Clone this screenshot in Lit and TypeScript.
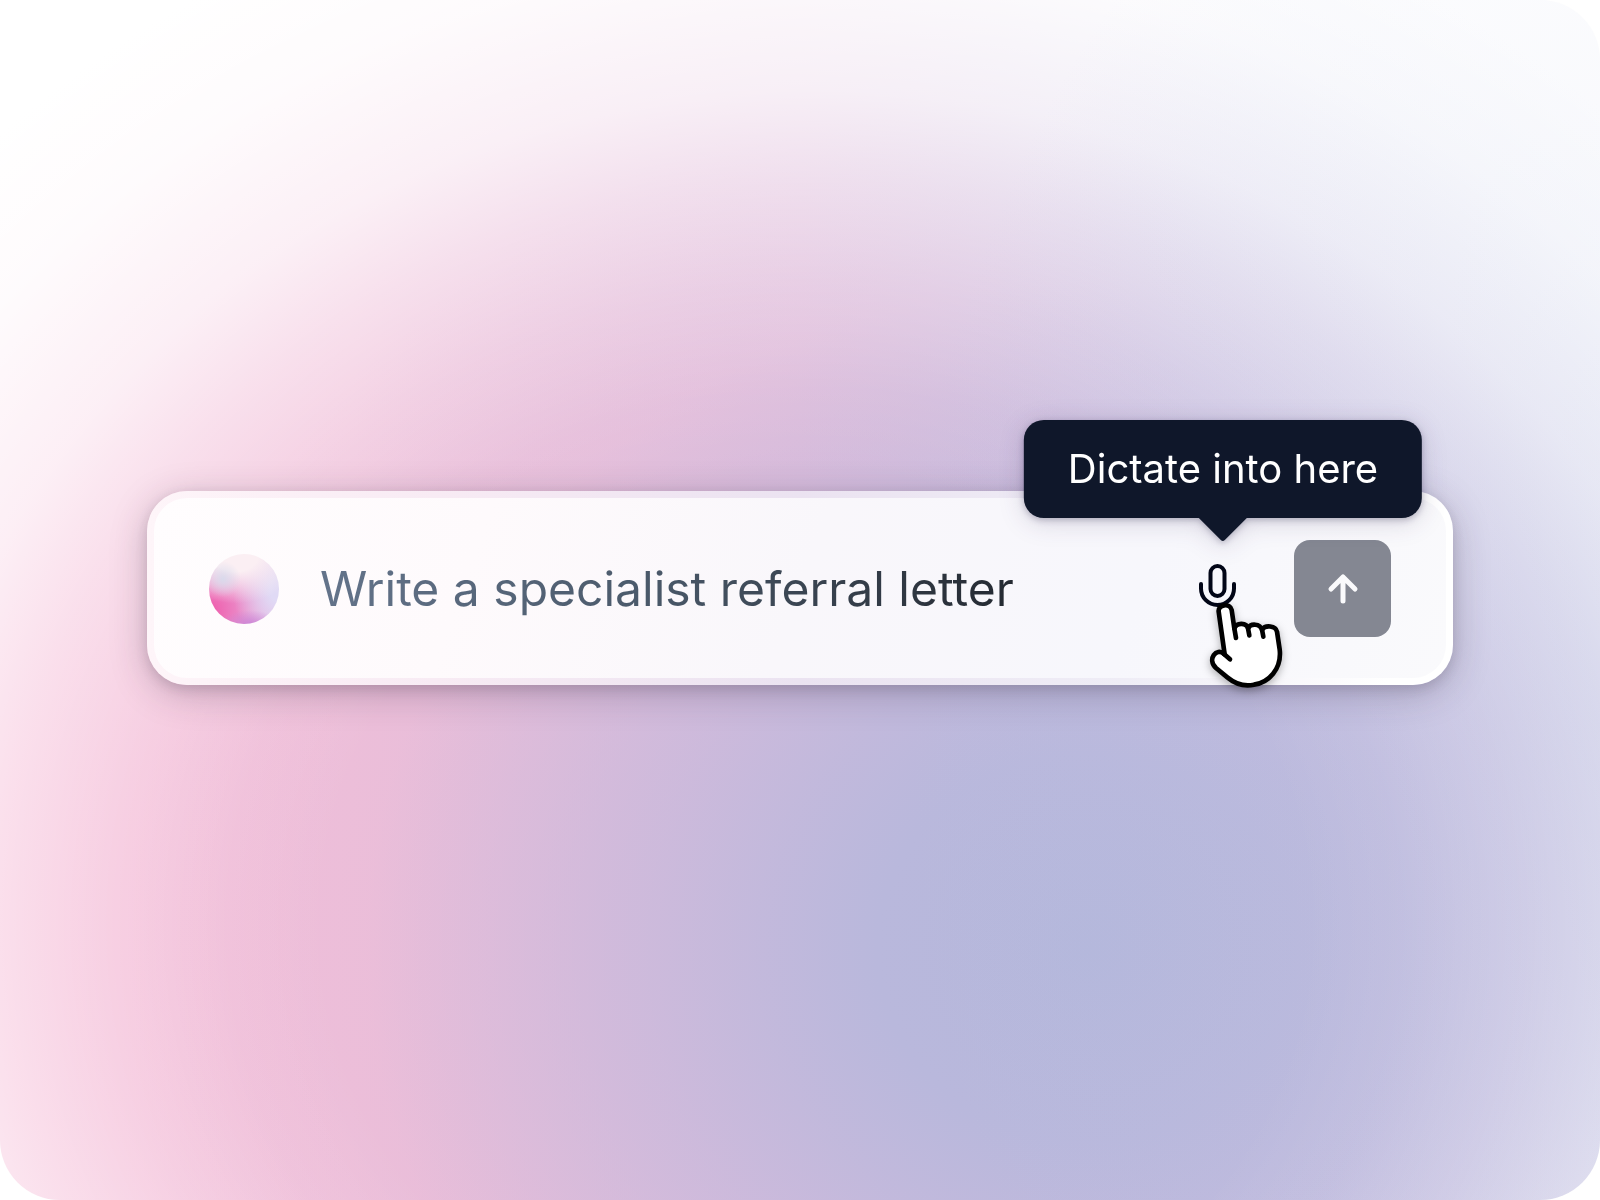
import { LitElement, html, css, svg } from "lit";
import { customElement, property } from "lit/decorators.js";

const micIcon = svg`
  <svg class="icon" viewBox="0 0 56 56" aria-hidden="true">
    <rect x="20.5" y="5" width="14" height="30" rx="7"></rect>
    <path d="M11 23v4.5a16.5 16.5 0 0 0 33 0V23"></path>
  </svg>`;

const arrowIcon = svg`
  <svg class="arrow" viewBox="0 0 40 40" aria-hidden="true">
    <path d="M20 32V8M8 20L20 8L32 20"></path>
  </svg>`;

const handCursor = svg`
  <svg class="cursor" viewBox="84 180 234 282" aria-hidden="true">
    <path class="hand" d="M134 340L116 212C113 190 150 185 155 207L163 262C170 243 200 245 204 262C212 246 240 248 246 266C256 251 287 254 291 272L299 325C306 385 265 425 222 431C190 438 165 428 142 409L108 381C80 355 110 318 132 339Z"></path>
    <path class="crease" d="M163 262L168 291M204 262L208 283M246 266L250 287M132 339L150 355"></path>
  </svg>`;

@customElement("prompt-bar")
export class PromptBar extends LitElement {
  @property() prompt = "";
  @property() hint = "";

  static styles = css`
    :host {
      display: block;
      flex: 1;
      min-width: 0;
    }
    .bar {
      display: flex;
      align-items: center;
      box-sizing: border-box;
      padding: 42px 55px 41px;
      border: 7px solid transparent;
      border-radius: 40px;
      background:
        linear-gradient(110deg, #fffdfe 0%, #fefafc 25%, #f9f7fb 50%, #f7f7fc 75%, #fafafc 100%) padding-box,
        linear-gradient(90deg, #fef5f9 0%, #f8ebf4 22%, #ebe3f1 50%, #efedf6 75%, #ffffff 95%) border-box;
      box-shadow:
        0 8px 36px rgba(50, 40, 60, 0.26),
        0 4px 12px rgba(50, 40, 60, 0.14);
    }
    .orb {
      flex: none;
      width: 70px;
      height: 70px;
      margin-right: 41px;
      border-radius: 50%;
      background:
        radial-gradient(ellipse 28px 14px at 58% 100%, rgba(202, 132, 214, 0.9), rgba(212, 150, 220, 0) 100%),
        radial-gradient(circle 18px at 20% 36%, rgba(214, 218, 236, 0.9), rgba(228, 224, 238, 0) 100%),
        radial-gradient(ellipse 66px 48px at 38% 2%, #fbeff3 34%, rgba(251, 236, 243, 0) 100%),
        radial-gradient(ellipse 46px 60px at 100% 50%, #e0daf5 20%, rgba(230, 214, 242, 0) 100%),
        radial-gradient(circle 76px at 2% 80%, #ef5cab 0%, rgba(236, 122, 190, 0.85) 36%, rgba(230, 180, 224, 0) 100%),
        #e6c8ec;
    }
    .prompt {
      flex: 1;
      min-width: 0;
      height: 72px;
      padding: 0;
      border: 0;
      outline: 0;
      font: 400 48px/72px Inter, "Liberation Sans", sans-serif;
      color: transparent;
      background: linear-gradient(100deg, #64748b 0, #4b5a6b 320px, #232830 700px) text;
      -webkit-background-clip: text;
    }
    .dictation {
      position: relative;
      flex: none;
      margin-right: 48px;
    }
    button {
      display: grid;
      place-items: center;
      padding: 0;
      border: 0;
    }
    .mic {
      background: none;
    }
    .icon {
      width: 56px;
      height: 56px;
      fill: none;
      stroke: #020617;
      stroke-width: 4;
      stroke-linecap: round;
    }
    .send {
      flex: none;
      width: 97px;
      height: 97px;
      border-radius: 16px;
      background: #848792;
    }
    .arrow {
      width: 40px;
      height: 40px;
      fill: none;
      stroke: #fafafc;
      stroke-width: 5;
      stroke-linecap: round;
      stroke-linejoin: round;
    }
    .tooltip {
      position: absolute;
      left: calc(50% + 5px);
      bottom: calc(100% + 43px);
      transform: translateX(-50%);
      padding: 0 44px;
      border-radius: 20px;
      background: #0f172a;
      color: #ffffff;
      font: 400 40px/98px Inter, "Liberation Sans", sans-serif;
      white-space: nowrap;
      filter: drop-shadow(0 2px 3px rgba(15, 15, 50, 0.25)) drop-shadow(0 4px 12px rgba(40, 20, 70, 0.16));
    }
    .pointer {
      position: absolute;
      top: calc(100% - 1px);
      left: 50%;
      width: 50px;
      height: 25px;
      transform: translateX(-50%);
      fill: #0f172a;
    }
    .cursor {
      position: absolute;
      left: 18px;
      top: 40px;
      width: 78px;
      height: 94px;
      pointer-events: none;
      filter: drop-shadow(0 3px 4px rgba(0, 0, 0, 0.3));
    }
    .hand {
      fill: #ffffff;
      stroke: #000000;
      stroke-width: 14;
      stroke-linejoin: round;
    }
    .crease {
      fill: none;
      stroke: #000000;
      stroke-width: 14;
      stroke-linecap: round;
    }
  `;

  render() {
    return html`
      <form class="bar" @submit=${(e: Event) => e.preventDefault()}>
        <span class="orb"></span>
        <input class="prompt" type="text" aria-label="Prompt" .value=${this.prompt} />
        <div class="dictation">
          <button class="mic" type="button" aria-labelledby="hint">${micIcon}</button>
          <div class="tooltip" role="tooltip">
            <span id="hint">${this.hint}</span>
            <svg class="pointer" viewBox="0 0 50 25" aria-hidden="true">
              <path d="M0 0H50L27 23Q25 25 23 23Z"></path>
            </svg>
          </div>
          ${handCursor}
        </div>
        <button class="send" type="submit" aria-label="Send">${arrowIcon}</button>
      </form>
    `;
  }
}

@customElement("app-root")
export class AppRoot extends LitElement {
  static styles = css`
    :host {
      display: block;
      background: #ffffff;
    }
    .stage {
      display: flex;
      align-items: center;
      box-sizing: border-box;
      min-height: 100vh;
      padding: 0 147px 24px;
      border-radius: 60px;
      background:
        radial-gradient(ellipse 44% 84% at 100% 60%, rgba(190, 197, 228, 0.26) 0%, rgba(190, 198, 230, 0.12) 45%, rgba(190, 200, 235, 0.05) 80%, rgba(190, 200, 235, 0) 100%),
        radial-gradient(
          ellipse 51% 62% at 51% 77%,
          rgba(255, 255, 255, 0) 0%,
          rgba(255, 255, 255, 0) 60%,
          rgba(255, 255, 255, 0.08) 72%,
          rgba(255, 255, 255, 0.28) 86%,
          rgba(255, 255, 255, 0.52) 100%,
          rgba(255, 255, 255, 0.76) 112%,
          rgba(255, 255, 255, 0.94) 130%,
          rgba(255, 255, 255, 1) 146%
        ),
        radial-gradient(ellipse 60% 74% at 68% 79%, #b4b7db 0%, #b9b8dc 22%, rgba(196, 185, 220, 0.72) 46%, rgba(222, 186, 217, 0.26) 75%, rgba(240, 184, 214, 0) 100%),
        linear-gradient(90deg, #f6bcd7 0%, #f0bfd9 22%, #dfbcdb 50%, #c5c0e1 75%, #b6bfe2 100%);
    }
  `;

  render() {
    return html`
      <main class="stage">
        <prompt-bar prompt="Write a specialist referral letter" hint="Dictate into here"></prompt-bar>
      </main>
    `;
  }
}
